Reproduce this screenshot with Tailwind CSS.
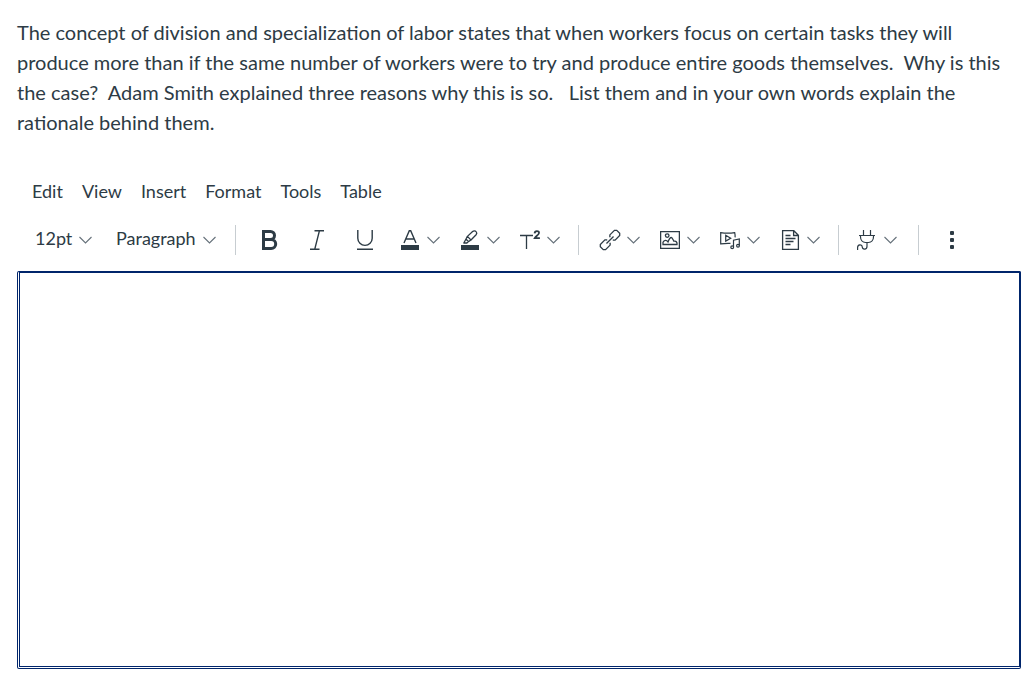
<!DOCTYPE html>
<html lang="en">
<head>
<meta charset="utf-8">
<meta name="viewport" content="width=device-width, initial-scale=1">
<title>Essay question</title>
<script src="https://cdn.jsdelivr.net/npm/@tailwindcss/browser@4"></script>
</head>
<body class="flex min-h-screen flex-col bg-white pt-[17px] pr-3 pb-3 pl-[17px] font-['Lato',sans-serif] text-[#2d3b45]">
<svg class="hidden" aria-hidden="true"><symbol id="chev" viewBox="0 0 13 8"><path d="M.5 1 6.5 7l6-6" fill="none" stroke="#66717a" stroke-width="1.1"/></symbol></svg>

<p id="question" class="mb-[38px] text-[20px] leading-[30px]">The concept of division and specialization of labor states that when workers focus on certain tasks they will produce more than if the same number of workers were to try and produce entire goods themselves.&nbsp; Why is this the case?&nbsp; Adam Smith explained three reasons why this is so.&nbsp;&nbsp; List them and in your own words explain the rationale behind them.</p>

<nav aria-label="Editor menu" class="flex h-8 items-center gap-[19px] pl-[15px] text-[18px] leading-6">
  <button type="button">Edit</button>
  <button type="button">View</button>
  <button type="button">Insert</button>
  <button type="button">Format</button>
  <button type="button">Tools</button>
  <button type="button">Table</button>
</nav>

<div role="toolbar" aria-label="Formatting" class="mt-[18px] mb-4 flex h-[30px] items-center pl-[18px] text-[18px] leading-6">
  <button type="button" class="flex w-[81px] items-center gap-[7px]"><span class="pb-1">12pt</span><svg class="h-2 w-[13px]"><use href="#chev"/></svg></button>
  <button type="button" class="flex w-[119px] items-center gap-[7px]"><span class="pb-1">Paragraph</span><svg class="h-2 w-[13px]"><use href="#chev"/></svg></button>
  <span class="mr-[10px] h-[30px] w-px bg-[#c7cdd1]"></span>

  <button type="button" aria-label="Bold" class="flex w-12 justify-center"><svg class="size-5" viewBox="0 0 20 20" fill="none" stroke="#2d3b45" stroke-width="3"><path d="M3.500 1.500H10.500a4 4 0 0 1 0 8H3.500zM3.500 9.500h7.700a4.400 4.400 0 0 1 0 9H3.500z"/></svg></button>
  <button type="button" aria-label="Italic" class="flex w-12 justify-center"><svg class="size-5" viewBox="0 0 20 20" fill="none" stroke="#2d3b45" stroke-width="1.4"><path d="M6.500.8H16M2 19.300h9.500M11.400.8 6.700 19.300"/></svg></button>
  <button type="button" aria-label="Underline" class="flex w-12 justify-center"><svg class="size-5" viewBox="0 0 20 20" fill="none" stroke="#2d3b45" stroke-width="1.4"><path d="M1.800 0v8.200a7.200 7.200 0 0 0 14.400 0V0M1 19.300h16"/></svg></button>

  <button type="button" aria-label="Text color" class="flex w-[60px] items-center gap-[7px] pl-[10px]"><svg class="size-5" viewBox="0 0 20 20" fill="none" stroke="#2d3b45" stroke-width="1.4"><path d="M4 13 9.300.7h1.400L16 13M5.800 9h8.400"/><path d="M1 15h18v5H1z" fill="#2d3b45" stroke="none"/></svg><svg class="h-2 w-[13px]"><use href="#chev"/></svg></button>
  <button type="button" aria-label="Background color" class="flex w-[60px] items-center gap-[7px] pl-[10px]"><svg class="size-5" viewBox="0 0 20 20" fill="none" stroke="#2d3b45" stroke-width="1.300" stroke-linejoin="round"><path d="m7.400 6.400 5.200-4.900c1-.9 2.700-.9 3.500.1.800.9.800 2.200 0 3.100l-5.100 5.300zM7.400 6.400 6 9l2.400 2.600L11 10M6 9l-2.200 4h3.100l1.500-1.400"/><path d="M1 15h18v5H1z" fill="#2d3b45" stroke="none"/></svg><svg class="h-2 w-[13px]"><use href="#chev"/></svg></button>
  <button type="button" aria-label="Superscript" class="flex w-[60px] items-center gap-[7px] pl-[10px]"><svg class="size-5" viewBox="0 0 20 20" fill="none" stroke="#2d3b45" stroke-width="1.3"><path d="M0 5.500h13M6.500 5.500V19"/><path d="M14.600 3.400c.2-3.200 4.600-2.900 4.400-.4-.1 2-3.200 3-4.300 5.100h5.200" stroke-width="1.800"/></svg><svg class="h-2 w-[13px]"><use href="#chev"/></svg></button>

  <span class="mr-[10px] ml-[8px] h-[30px] w-px bg-[#c7cdd1]"></span>

  <button type="button" aria-label="Link" class="flex w-[60px] items-center gap-[7px] pl-[11px]"><svg class="size-5 overflow-visible" viewBox="0 0 20 20" fill="none" stroke="#2d3b45" stroke-width="1.300"><g transform="rotate(-45 10 10)"><path d="M7.700 11.800v.7l-1.200 1.200H0l-1.600-1.600V7.900L0 6.300h6.500l1.200 1.200v.7M12.300 8.200v-.7l1.200-1.200H20l1.600 1.600v4.200L20 13.700h-6.500l-1.200-1.200v-.7M5 10h10"/></g></svg><svg class="h-2 w-[13px]"><use href="#chev"/></svg></button>
  <button type="button" aria-label="Image" class="flex w-[60px] items-center gap-[7px] pl-[11px]"><svg class="size-5" viewBox="0 0 20 20" fill="none" stroke="#2d3b45" stroke-width="1.300"><path d="M.6 1.600h18.800v16.800H.6z"/><circle cx="7.200" cy="5.600" r="1.800"/><path d="M3 14.500v-2.300c1-2.300 3.500-2.600 5-.3 1.200-3.200 2-4.400 3.300-4.400s1.900 3.200 2.600 3.700c1.400-.5 2.600.4 3.100 1.800v1.500z"/></svg><svg class="h-2 w-[13px]"><use href="#chev"/></svg></button>
  <button type="button" aria-label="Media" class="flex w-[60px] items-center gap-[7px] pl-[11px]"><svg class="size-5" viewBox="0 0 20 20" fill="none" stroke="#2d3b45" stroke-width="1.200"><path d="M10.500 13.400c-3.300-.2-6.500 0-9.800.5V2.600c4.700.7 9.300.7 14 0 .4 1.600.5 3 .4 4.800"/><path d="m5.700 5.300 5 2.900-5 2.900zM13.500 17V10.200l5.800-1.300v6.700"/><circle cx="12.200" cy="17.300" r="1.400"/><circle cx="18" cy="15.800" r="1.400"/></svg><svg class="h-2 w-[13px]"><use href="#chev"/></svg></button>
  <button type="button" aria-label="Documents" class="flex w-[60px] items-center gap-[7px] pl-[11px]"><svg class="size-5" viewBox="0 0 20 20" fill="none" stroke="#2d3b45" stroke-width="1.300"><path d="M2.600.7h11.200l4.600 4.600v14H2.600zM13.600.7v4.800h4.800"/><path d="M5.500 5.500h5M5.500 8.500h10M5.500 11.500h8M5.500 14.500h5"/></svg><svg class="h-2 w-[13px]"><use href="#chev"/></svg></button>

  <span class="mr-[6px] ml-[9px] h-[30px] w-px bg-[#c7cdd1]"></span>

  <button type="button" aria-label="Apps" class="flex w-[64px] items-center gap-2 pl-[11px]"><svg class="size-5" viewBox="0 0 20 20" fill="none" stroke="#2d3b45" stroke-width="1.200"><path d="M7.500 0v5M14.500 0v5M3 5.500h16M4.500 5.500v1.300c0 3.500 2.200 5.700 5 5.700h3c2.800 0 5-2.200 5-5.700V5.500"/><path d="M11 12.500v3.700c0 3.800-4.500 3.800-4.800.6-.3-3-4.600-2.600-4.600.8V20"/></svg><svg class="h-2 w-[13px]"><use href="#chev"/></svg></button>

  <span class="mr-[9px] ml-[9px] h-[30px] w-px bg-[#c7cdd1]"></span>

  <button type="button" aria-label="More" class="flex w-12 justify-center"><svg class="size-5" viewBox="0 0 20 20" fill="#2d3b45"><rect x="8" y="1" width="4" height="4" rx="1"/><rect x="8" y="8" width="4" height="4" rx="1"/><rect x="8" y="15" width="4" height="4" rx="1"/></svg></button>
</div>

<textarea aria-labelledby="question" class="block w-full flex-1 resize-none rounded-[2px] border-t-2 border-r-2 border-b-3 border-l-3 border-double border-[#00256b] bg-white p-3 text-[20px] leading-[30px] outline-none"></textarea>
</body>
</html>
